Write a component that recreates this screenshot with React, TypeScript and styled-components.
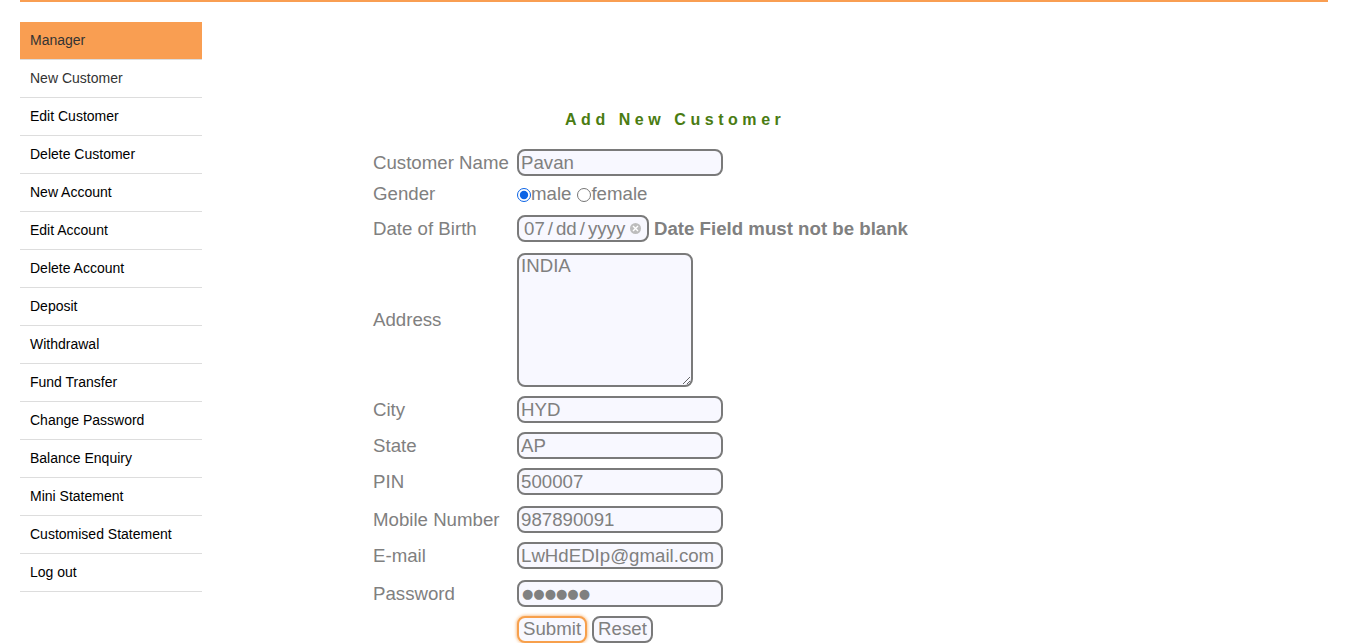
import React from "react";
import styled, { createGlobalStyle } from "styled-components";

const Global = createGlobalStyle`
  html, body { margin: 0; padding: 0; background: #fff; }
  body { font-family: "Liberation Sans", Arial, sans-serif; }
  * { box-sizing: border-box; }
`;

const TopLine = styled.div`
  margin-left: 20px;
  width: 1308px;
  height: 2px;
  background: #f99e52;
`;

const Page = styled.div`
  display: flex;
  padding: 0 20px;
`;

const Sidebar = styled.ul`
  list-style: none;
  margin: 20px 0 0;
  padding: 0;
  width: 182px;
  flex: none;
`;

const NavItem = styled.li<{ $head?: boolean; $dim?: boolean }>`
  height: 38px;
  display: flex;
  align-items: center;
  padding: 0 0 2px 10px;
  font-size: 14px;
  color: ${(p) => (p.$head || p.$dim ? "#333" : "#000")};
  background: ${(p) => (p.$head ? "#f99e52" : "transparent")};
  border-bottom: 1px solid #ddd;
`;

const Main = styled.div`
  flex: 1;
  padding-left: 171px;
`;

const Title = styled.p`
  margin: 108px 0 0 192px;
  height: 20px;
  line-height: 20px;
  font-size: 16px;
  font-weight: bold;
  letter-spacing: 4.55px;
  color: #4a7c12;
`;

const Form = styled.div`
  margin-top: 19px;
  display: flex;
  flex-direction: column;
`;

const Row = styled.div<{ $mt?: number }>`
  display: grid;
  grid-template-columns: 144px auto;
  align-items: center;
  margin-top: ${(p) => p.$mt ?? 0}px;
`;

const Label = styled.span`
  font-size: 18.67px;
  line-height: 20px;
  color: #808080;
  white-space: nowrap;
`;

const Cell = styled.div`
  display: flex;
  align-items: center;
`;

const fieldBase = `
  border: 2px solid #7a7a7a;
  border-radius: 8px;
  background: #f8f8ff;
  font-family: "Liberation Sans", Arial, sans-serif;
  font-size: 18.67px;
  color: #808080;
  outline: none;
`;

const TextInput = styled.input`
  ${fieldBase}
  width: 206px;
  height: 27px;
  padding: 0 2px;
  margin: 0;
`;

const MaskInput = styled(TextInput)`
  font-family: "DejaVu Sans", sans-serif;
  font-size: 13px;
  letter-spacing: 0;
  padding-left: 3px;
`;

const TextArea = styled.textarea`
  ${fieldBase}
  width: 176px;
  height: 134px;
  padding: 0 2px;
  margin: 0;
  display: block;
`;

const RadioRow = styled.div`
  display: flex;
  align-items: center;
  height: 20px;
  font-size: 18.67px;
  line-height: 20px;
  color: #808080;
`;

const Radio = styled.input<{ $first?: boolean }>`
  width: 14px;
  height: 14px;
  accent-color: #0b63e5;
  margin: 2px 0 0 ${(p) => (p.$first ? 0 : 6)}px;
`;

const DateBox = styled.div`
  ${fieldBase}
  width: 132px;
  height: 27px;
  padding: 0 0 0 5px;
  display: flex;
  align-items: center;
`;

const DatePart = styled.span`
  color: #808080;
`;

const Sep = styled.span`
  color: #808080;
  margin: 0 3px;
`;

const ClearIcon = styled.span`
  width: 11px;
  height: 11px;
  margin-left: 5px;
  border-radius: 50%;
  background: #bdbdbd;
  display: inline-flex;
  align-items: center;
  justify-content: center;
`;

const ErrorText = styled.span`
  margin-left: 5px;
  font-size: 18.67px;
  line-height: 20px;
  font-weight: bold;
  color: #808080;
  white-space: nowrap;
`;

const Button = styled.button<{ $focus?: boolean }>`
  ${fieldBase}
  height: 27px;
  padding: 0 4px;
  margin: 0 5px 0 0;
  line-height: 1;
  border-color: ${(p) => (p.$focus ? "#f7a04c" : "#7a7a7a")};
  box-shadow: ${(p) => (p.$focus ? "0 0 3px 1px rgba(247,160,76,0.6)" : "none")};
`;

const navItems = [
  "Edit Customer",
  "Delete Customer",
  "New Account",
  "Edit Account",
  "Delete Account",
  "Deposit",
  "Withdrawal",
  "Fund Transfer",
  "Change Password",
  "Balance Enquiry",
  "Mini Statement",
  "Customised Statement",
  "Log out",
];

const Field = ({ label, value, mt }: { label: string; value: string; mt: number }) => (
  <Row $mt={mt}>
    <Label>{label}</Label>
    <Cell>
      <TextInput type="text" defaultValue={value} />
    </Cell>
  </Row>
);

export default function App() {
  return (
    <>
      <Global />
      <TopLine />
      <Page>
        <Sidebar>
          <NavItem $head>Manager</NavItem>
          <NavItem $dim>New Customer</NavItem>
          {navItems.map((n) => (
            <NavItem key={n}>{n}</NavItem>
          ))}
        </Sidebar>
        <Main>
          <Title>Add New Customer</Title>
          <Form>
            <Field label="Customer Name" value="Pavan" mt={0} />
            <Row $mt={8}>
              <Label>Gender</Label>
              <RadioRow>
                <Radio $first type="radio" name="g" defaultChecked />
                male
                <Radio type="radio" name="g" />
                female
              </RadioRow>
            </Row>
            <Row $mt={11}>
              <Label>Date of Birth</Label>
              <Cell>
                <DateBox>
                  <DatePart>07</DatePart>
                  <Sep>/</Sep>
                  <DatePart>dd</DatePart>
                  <Sep>/</Sep>
                  <DatePart>yyyy</DatePart>
                  <ClearIcon>
                    <svg width="7" height="7" viewBox="0 0 7 7">
                      <path d="M1 1 L6 6 M6 1 L1 6" stroke="#fff" strokeWidth="1.4" />
                    </svg>
                  </ClearIcon>
                </DateBox>
                <ErrorText>Date Field must not be blank</ErrorText>
              </Cell>
            </Row>
            <Row $mt={11}>
              <Label>Address</Label>
              <Cell>
                <TextArea defaultValue="INDIA" />
              </Cell>
            </Row>
            <Field label="City" value="HYD" mt={9} />
            <Field label="State" value="AP" mt={9} />
            <Field label="PIN" value="500007" mt={9} />
            <Field label="Mobile Number" value="987890091" mt={11} />
            <Field label="E-mail" value="LwHdEDIp@gmail.com" mt={9} />
            <Row $mt={11}>
              <Label>Password</Label>
              <Cell>
                <MaskInput type="text" aria-label="Password" readOnly defaultValue={"\u25CF\u25CF\u25CF\u25CF\u25CF\u25CF"} />
              </Cell>
            </Row>
            <Row $mt={9}>
              <span />
              <Cell>
                <Button $focus>Submit</Button>
                <Button>Reset</Button>
              </Cell>
            </Row>
          </Form>
        </Main>
      </Page>
    </>
  );
}
